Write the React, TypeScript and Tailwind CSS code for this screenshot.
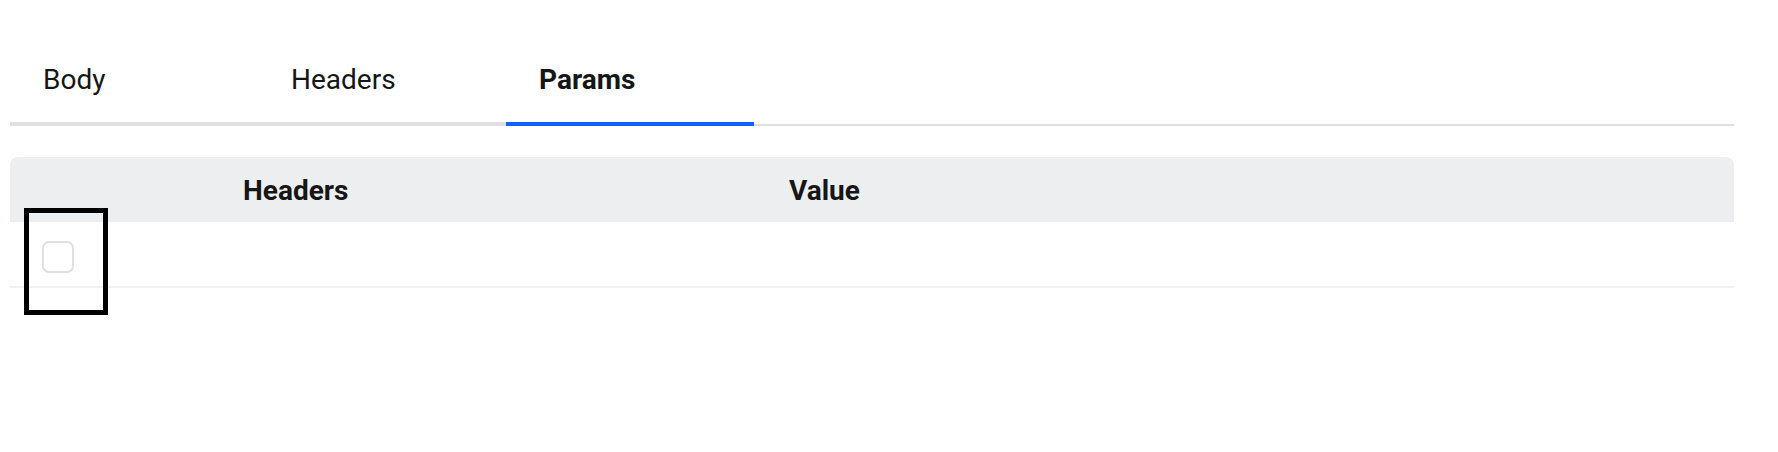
import { useState } from "react";

const tabs = ["Body", "Headers", "Params"];

export default function App() {
  const [active, setActive] = useState("Params");
  const [checked, setChecked] = useState(false);

  return (
    <div
      className="relative min-h-[452px] bg-white text-[#161616]"
      style={{ fontFamily: "Roboto, 'Liberation Sans', sans-serif" }}
    >
      <div className="ml-[10px] w-[1724px] pt-[32px]">
        <div className="flex border-b-2 border-[#e0e0e0]">
          {tabs.map((tab) => (
            <button
              key={tab}
              onClick={() => setActive(tab)}
              className={`-mb-[2px] flex h-[94px] w-[248px] items-center border-b-4 pl-[33px] pt-[5px] text-left text-[28px] ${
                active === tab
                  ? "border-[#0f62fe] font-bold"
                  : "border-[#e0e0e0] font-normal"
              }`}
            >
              {tab}
            </button>
          ))}
        </div>

        <div className="mt-[31px]">
          <div className="flex h-[65px] items-center rounded-t-lg bg-[#edeef0] pt-[2px] text-[28px] font-bold">
            <div className="w-[217px]" />
            <div className="w-[547px] pl-[16px]">Headers</div>
            <div className="pl-[15px]">Value</div>
          </div>
          <div className="flex h-[66px] items-start border-b-2 border-[#f2f2f2] pt-[19px]">
            <div className="w-[217px] pl-[32px]">
              <button
                onClick={() => setChecked(!checked)}
                className={`block h-[32px] w-[32px] rounded-[7px] border-2 ${
                  checked ? "border-[#0f62fe] bg-[#0f62fe]" : "border-[#e0e0e0] bg-white"
                }`}
              />
            </div>
          </div>
        </div>
      </div>

      <div className="pointer-events-none absolute left-[24px] top-[208px] h-[107px] w-[84px] border-[5px] border-black" />
    </div>
  );
}
